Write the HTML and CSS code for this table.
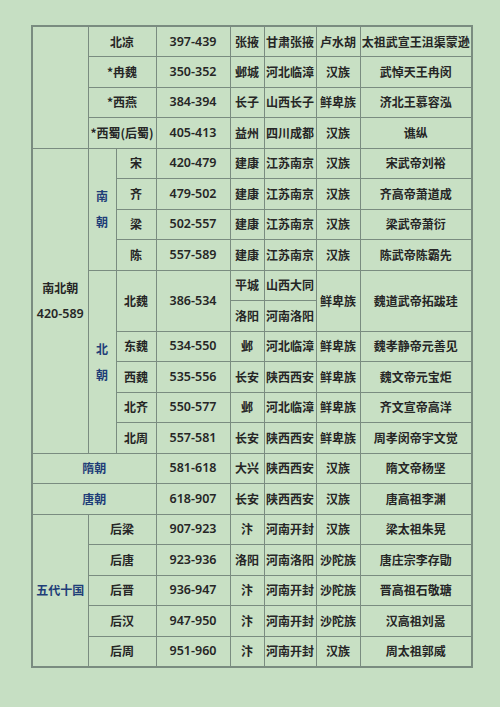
FILE: index.html
```html
<!DOCTYPE html>
<html lang="zh">
<head>
<meta charset="utf-8">
<title>朝代表</title>
<link rel="stylesheet" href="styles.css">
</head>
<body>
<div class="page">
<table class="dyn">
<colgroup>
<col class="c1"><col class="c2"><col class="c3"><col class="c4"><col class="c5"><col class="c6"><col class="c7"><col class="c8">
</colgroup>
<tbody>
<tr><td rowspan="4"></td><td colspan="2">北凉</td><td class="num">397-439</td><td>张掖</td><td>甘肃张掖</td><td>卢水胡</td><td>太祖武宣王沮渠蒙逊</td></tr>
<tr><td colspan="2">*冉魏</td><td class="num">350-352</td><td>邺城</td><td>河北临漳</td><td>汉族</td><td>武悼天王冉闵</td></tr>
<tr><td colspan="2">*西燕</td><td class="num">384-394</td><td>长子</td><td>山西长子</td><td>鲜卑族</td><td>济北王慕容泓</td></tr>
<tr><td colspan="2">*西蜀(后蜀)</td><td class="num">405-413</td><td>益州</td><td>四川成都</td><td>汉族</td><td>谯纵</td></tr>
<tr><td rowspan="10" class="era"><div class="stack"><span>南北朝</span><span class="num">420-589</span></div></td><td rowspan="4" class="blue"><div class="stack"><span>南</span><span>朝</span></div></td><td>宋</td><td class="num">420-479</td><td>建康</td><td>江苏南京</td><td>汉族</td><td>宋武帝刘裕</td></tr>
<tr><td>齐</td><td class="num">479-502</td><td>建康</td><td>江苏南京</td><td>汉族</td><td>齐高帝萧道成</td></tr>
<tr><td>梁</td><td class="num">502-557</td><td>建康</td><td>江苏南京</td><td>汉族</td><td>梁武帝萧衍</td></tr>
<tr><td>陈</td><td class="num">557-589</td><td>建康</td><td>江苏南京</td><td>汉族</td><td>陈武帝陈霸先</td></tr>
<tr><td rowspan="6" class="blue"><div class="stack"><span>北</span><span>朝</span></div></td><td rowspan="2">北魏</td><td rowspan="2" class="num">386-534</td><td>平城</td><td>山西大同</td><td rowspan="2">鲜卑族</td><td rowspan="2">魏道武帝拓跋珪</td></tr>
<tr><td>洛阳</td><td>河南洛阳</td></tr>
<tr><td>东魏</td><td class="num">534-550</td><td>邺</td><td>河北临漳</td><td>鲜卑族</td><td>魏孝静帝元善见</td></tr>
<tr><td>西魏</td><td class="num">535-556</td><td>长安</td><td>陕西西安</td><td>鲜卑族</td><td>魏文帝元宝炬</td></tr>
<tr><td>北齐</td><td class="num">550-577</td><td>邺</td><td>河北临漳</td><td>鲜卑族</td><td>齐文宣帝高洋</td></tr>
<tr><td>北周</td><td class="num">557-581</td><td>长安</td><td>陕西西安</td><td>鲜卑族</td><td>周孝闵帝宇文觉</td></tr>
<tr><td colspan="3" class="blue">隋朝</td><td class="num">581-618</td><td>大兴</td><td>陕西西安</td><td>汉族</td><td>隋文帝杨坚</td></tr>
<tr><td colspan="3" class="blue">唐朝</td><td class="num">618-907</td><td>长安</td><td>陕西西安</td><td>汉族</td><td>唐高祖李渊</td></tr>
<tr><td rowspan="5" class="blue">五代十国</td><td colspan="2">后梁</td><td class="num">907-923</td><td>汴</td><td>河南开封</td><td>汉族</td><td>梁太祖朱晃</td></tr>
<tr><td colspan="2">后唐</td><td class="num">923-936</td><td>洛阳</td><td>河南洛阳</td><td>沙陀族</td><td>唐庄宗李存勖</td></tr>
<tr><td colspan="2">后晋</td><td class="num">936-947</td><td>汴</td><td>河南开封</td><td>沙陀族</td><td>晋高祖石敬瑭</td></tr>
<tr><td colspan="2">后汉</td><td class="num">947-950</td><td>汴</td><td>河南开封</td><td>沙陀族</td><td>汉高祖刘暠</td></tr>
<tr><td colspan="2">后周</td><td class="num">951-960</td><td>汴</td><td>河南开封</td><td>汉族</td><td>周太祖郭威</td></tr>
</tbody>
</table>
</div>
</body>
</html>
```

FILE: styles.css
```css
html, body {
  margin: 0;
  padding: 0;
  background: #c6dfc3;
}
.page {
  width: 500px;
  height: 707px;
  padding: 25px 0 0 31px;
  box-sizing: border-box;
}
.dyn {
  border-collapse: collapse;
  table-layout: fixed;
  width: 440px;
  height: 642px;
  border: 2px solid #7a8c80;
  font-family: "Noto Sans CJK SC", "Noto Sans", sans-serif;
  font-size: 12px;
  font-weight: 700;
  color: #262626;
  background: #c8e0c4;
}
.c1 { width: 56px; }
.c2 { width: 28px; }
.c3 { width: 40px; }
.c4 { width: 74px; }
.c5 { width: 34px; }
.c6 { width: 52px; }
.c7 { width: 44px; }
.c8 { width: 112px; }
.dyn tr {
  height: 30.5px;
}
.dyn td {
  border: 1px solid #7a8c80;
  padding: 0;
  text-align: center;
  vertical-align: middle;
  white-space: nowrap;
  overflow: hidden;
  line-height: 14px;
}
.dyn td.num {
  font-family: "Noto Sans", sans-serif;
  font-size: 12.5px;
  font-weight: 600;
}
.dyn td.blue {
  color: #1f3e78;
}
.stack {
  display: flex;
  flex-direction: column;
  align-items: center;
  gap: 12px;
}
.stack .num {
  font-family: "Noto Sans", sans-serif;
  font-size: 12.5px;
  font-weight: 600;
}
```
